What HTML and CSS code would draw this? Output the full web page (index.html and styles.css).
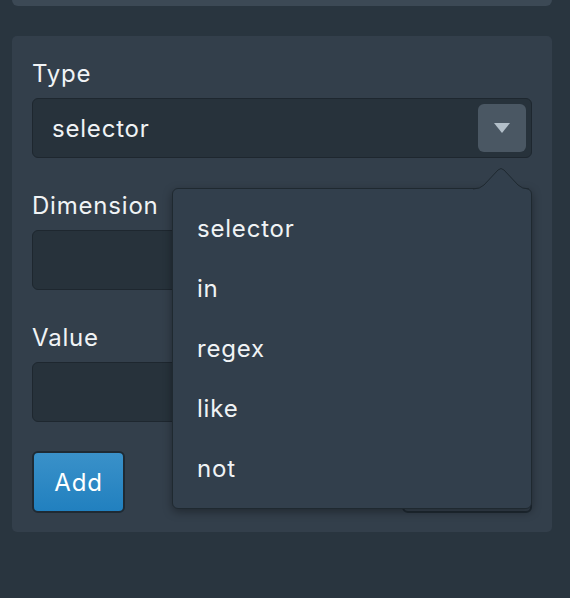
FILE: index.html
```html
<!DOCTYPE html>
<html lang="en">
<head>
    <meta charset="UTF-8">
    <title>Filter</title>
    <link rel="stylesheet" href="styles.css">
</head>
<body>

<div class="top-card"></div>

<div class="filter-card">
    <form class="filter-form">
        <label class="field-label">Type</label>
        <div class="select-box">
            <span class="select-value">selector</span>
            <span class="select-toggle"><span class="caret"></span></span>
        </div>

        <label class="field-label">Dimension</label>
        <div class="text-field"></div>

        <label class="field-label">Value</label>
        <div class="text-field last-field"></div>

        <div class="actions">
            <button type="button" class="btn btn-primary">Add</button>
            <button type="button" class="btn btn-secondary">Cancel</button>
        </div>
    </form>

    <!-- dropdown for the Type select, opened -->
    <div class="popover">
        <svg class="popover-arrow" width="56" height="24" viewBox="0 0 56 24">
            <path d="M0 23 Q7 23 11 19 L25 4 Q28 1 31 4 L45 19 Q49 23 56 23 Z" fill="#323f4c"/>
            <path d="M0 23 Q7 23 11 19 L25 4 Q28 1 31 4 L45 19 Q49 23 56 23" fill="none" stroke="#1f2930" stroke-width="1"/>
        </svg>
        <ul class="menu">
            <li>selector</li>
            <li>in</li>
            <li>regex</li>
            <li>like</li>
            <li>not</li>
        </ul>
    </div>
</div>

</body>
</html>
```

FILE: styles.css
```css
body {
    font-family: Inter, "Open Sans", sans-serif;
    background-color: #29353f;
    margin: 0;
    padding: 0;
    color: #f0f3f5;
    letter-spacing: 0.8px;
}
.top-card {
    margin: 0 18px 0 12px;
    height: 6px;
    background-color: #3c4955;
    border-radius: 0 0 6px 6px;
}
.filter-card {
    position: relative;
    margin: 30px 18px 0 12px;
    padding: 23px 20px 19px 20px;
    background-color: #333f4b;
    border-radius: 5px;
}
.filter-form {
    display: flex;
    flex-direction: column;
}
.field-label {
    font-size: 24px;
    line-height: 29px;
    margin-bottom: 10px;
}
.select-box, .text-field {
    box-sizing: border-box;
    height: 60px;
    background-color: #27323b;
    border: 1px solid #1e272f;
    border-radius: 6px;
    margin-bottom: 33px;
}
.text-field.last-field {
    margin-bottom: 29px;
}
.select-box {
    display: flex;
    align-items: center;
    justify-content: space-between;
    padding: 0 5px 0 19px;
}
.select-value {
    font-size: 24px;
}
.select-toggle {
    width: 48px;
    height: 48px;
    background-color: #4a5763;
    border-radius: 6px;
    display: flex;
    align-items: center;
    justify-content: center;
}
.caret {
    width: 0;
    height: 0;
    border-left: 8.5px solid transparent;
    border-right: 8.5px solid transparent;
    border-top: 10px solid #b3bfc9;
}
.actions {
    display: flex;
    justify-content: space-between;
    align-items: flex-end;
}
.btn {
    font-family: Inter, "Open Sans", sans-serif;
    font-size: 24px;
    letter-spacing: 0.8px;
    color: #ffffff;
    border: 2px solid #1f2a33;
    border-radius: 6px;
    height: 62px;
    cursor: pointer;
}
.btn-primary {
    width: 93px;
    background: linear-gradient(#3a91c9, #2180bf);
}
.btn-secondary {
    width: 130px;
    background-color: #36424e;
}
.popover {
    position: absolute;
    left: 160px;
    top: 152px;
    width: 360px;
    height: 321px;
    box-sizing: border-box;
    background-color: #323f4c;
    border: 1px solid #1f2930;
    border-radius: 6px;
    box-shadow: 0 3px 10px rgba(0, 0, 0, 0.35);
}
.popover-arrow {
    position: absolute;
    right: 2px;
    top: -23px;
}
.menu {
    list-style: none;
    margin: 0;
    padding: 10px 0;
}
.menu li {
    height: 60px;
    line-height: 60px;
    padding-left: 24px;
    font-size: 24px;
}
```
